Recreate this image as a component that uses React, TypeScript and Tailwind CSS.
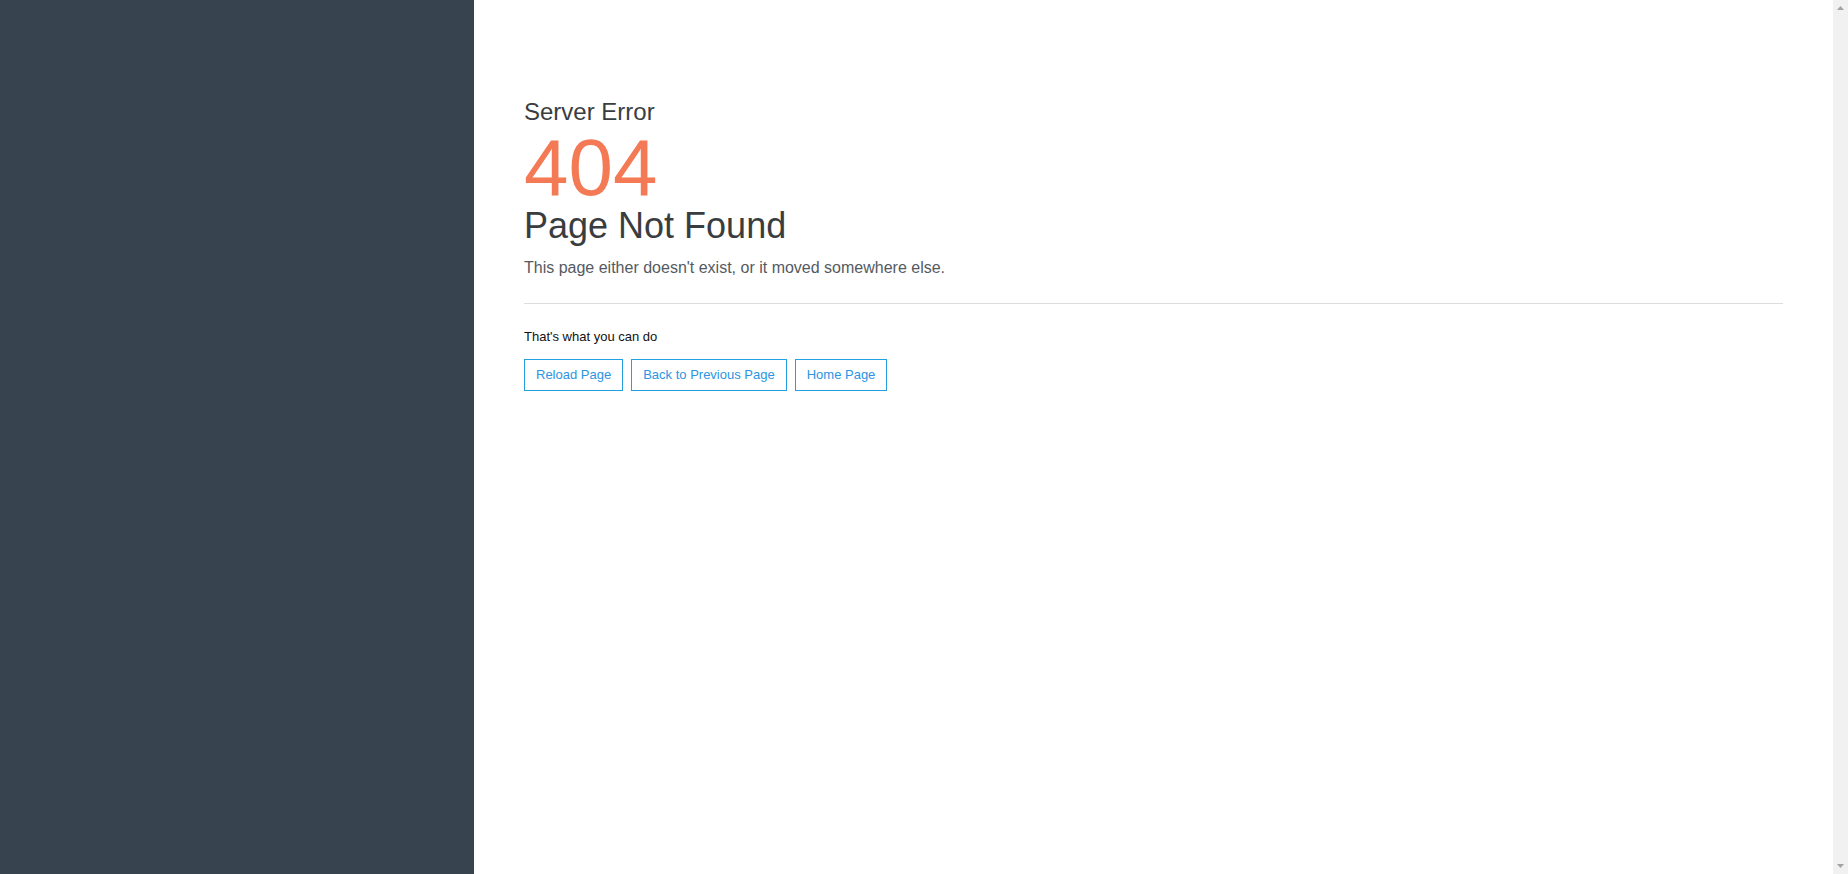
export default function App() {
  const actions = ['Reload Page', 'Back to Previous Page', 'Home Page'];

  return (
    <div className="flex h-screen overflow-hidden bg-white font-['Liberation_Sans',Arial,sans-serif]">
      <aside className="w-[474px] shrink-0 bg-[#37434f]" />
      <main className="flex-1 px-[50px] pt-[98px]">
        <h2 className="text-[24px] leading-[28px] text-[#3a3d40]">Server Error</h2>
        <h1 className="mt-[4px] text-[80px] leading-[76px] text-[#f47a55]">404</h1>
        <h3 className="text-[36px] leading-[40px] text-[#3a3d40]">Page Not Found</h3>
        <p className="mt-[12px] text-[16px] leading-[20px] text-[#555a5f]">
          This page either doesn't exist, or it moved somewhere else.
        </p>
        <hr className="mt-[25px] border-t border-[#dddddd]" />
        <p className="mt-[25px] text-[13px] leading-[16px] text-[#111]">That's what you can do</p>
        <div className="mt-[14px] flex gap-2">
          {actions.map((a) => (
            <button
              key={a}
              className="flex h-8 items-center border border-[#23a0de] px-[11px] text-[13px] leading-[16px] text-[#2b95e3] hover:bg-[#23a0de] hover:text-white"
            >
              {a}
            </button>
          ))}
        </div>
      </main>
      {/* scrollbar track */}
      <div className="flex w-[15px] shrink-0 flex-col items-center justify-between bg-[#f1f1f1] py-[6px]">
        <svg width="7" height="4" viewBox="0 0 7 4">
          <path d="M3.5 0L7 4H0z" fill="#a3a3a3" />
        </svg>
        <svg width="7" height="4" viewBox="0 0 7 4">
          <path d="M0 0h7L3.5 4z" fill="#a3a3a3" />
        </svg>
      </div>
    </div>
  );
}
